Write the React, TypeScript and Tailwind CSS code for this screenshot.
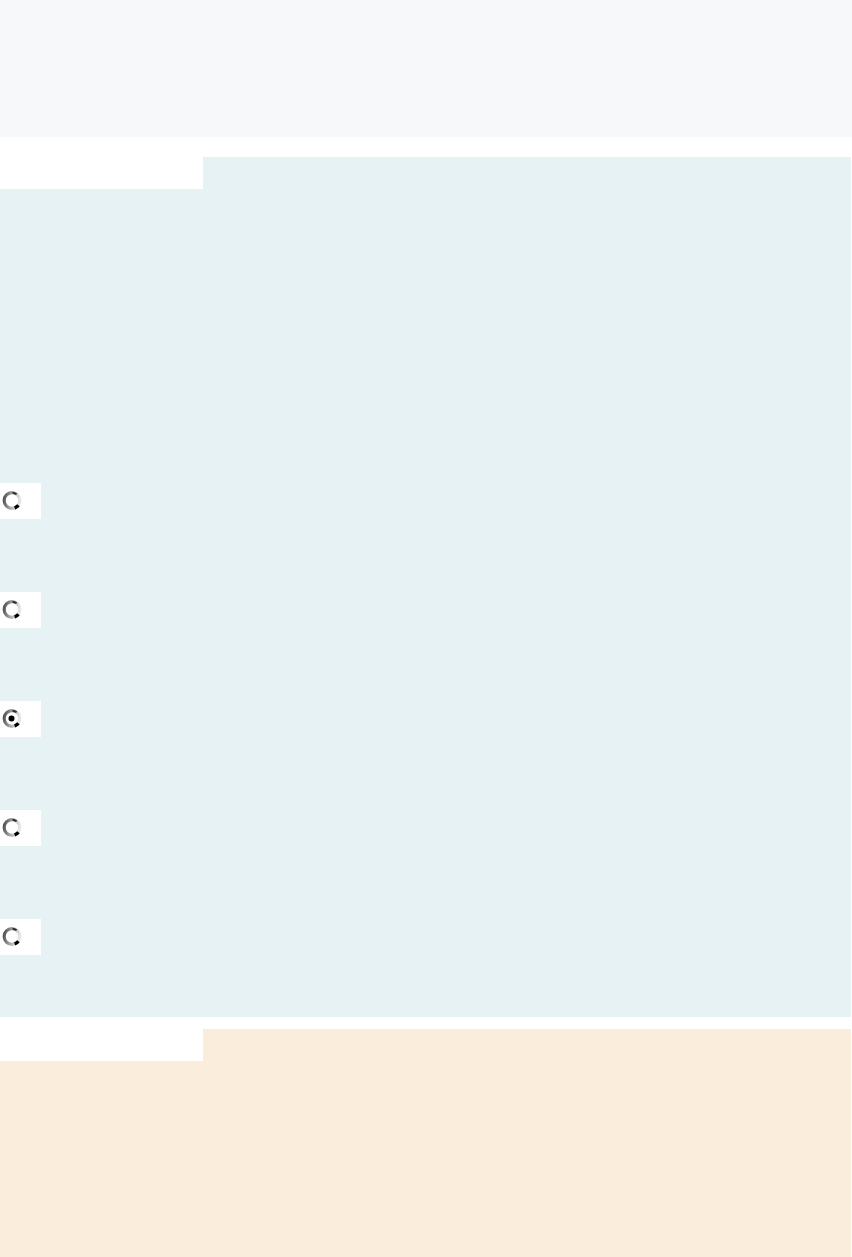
import React from 'react';

const RadioMark: React.FC<{ checked?: boolean }> = ({ checked }) => (
  <svg width="22" height="22" viewBox="0 0 22 22" className="block">
    <defs>
      <linearGradient id="ringGrad" x1="0" y1="0.2" x2="1" y2="0.4">
        <stop offset="0" stopColor="#555555" />
        <stop offset="0.5" stopColor="#a8a8a8" />
        <stop offset="1" stopColor="#e6e6e6" />
      </linearGradient>
    </defs>
    <circle cx="11" cy="10.5" r="7.8" fill="#ffffff" stroke="url(#ringGrad)" strokeWidth="3.2" />
    <path d="M11.5 2.7 A7.8 7.8 0 0 1 15.6 4.2" stroke="#2e2e2e" strokeWidth="2" fill="none" />
    <path d="M17.4 15.2 A7.8 7.8 0 0 1 13.6 17.9" stroke="#000000" strokeWidth="3.4" fill="none" />
    {checked && <circle cx="10.5" cy="10.5" r="3" fill="#000000" />}
  </svg>
);

const RadioBox: React.FC<{ checked?: boolean }> = ({ checked }) => (
  <div className="w-[41px] h-[36px] bg-white flex items-center pl-[1px]">
    <RadioMark checked={checked} />
  </div>
);

const PanelHeader: React.FC<{ tint: string }> = ({ tint }) => (
  <div className="flex h-[32px]">
    <div className="w-[203px] bg-white" />
    <div className={`flex-1 ${tint}`} />
  </div>
);

const App: React.FC = () => {
  const options = [false, false, true, false, false];

  return (
    <div className="w-[852px] min-h-screen bg-white font-['Liberation_Sans',Arial,sans-serif]">
      <div className="h-[137px] bg-[#f6f8fa]" />

      <div className="mt-[20px] w-[851px]">
        <PanelHeader tint="bg-[#e6f2f3]" />
        <div className="bg-[#e6f2f3] pt-[294px] pb-[62px] flex flex-col gap-[73px]">
          {options.map((checked, i) => (
            <RadioBox key={i} checked={checked} />
          ))}
        </div>
      </div>

      <div className="mt-[12px] w-[851px]">
        <PanelHeader tint="bg-[#faeddc]" />
        <div className="bg-[#faeddc] h-[196px]" />
      </div>
    </div>
  );
};

export default App;
